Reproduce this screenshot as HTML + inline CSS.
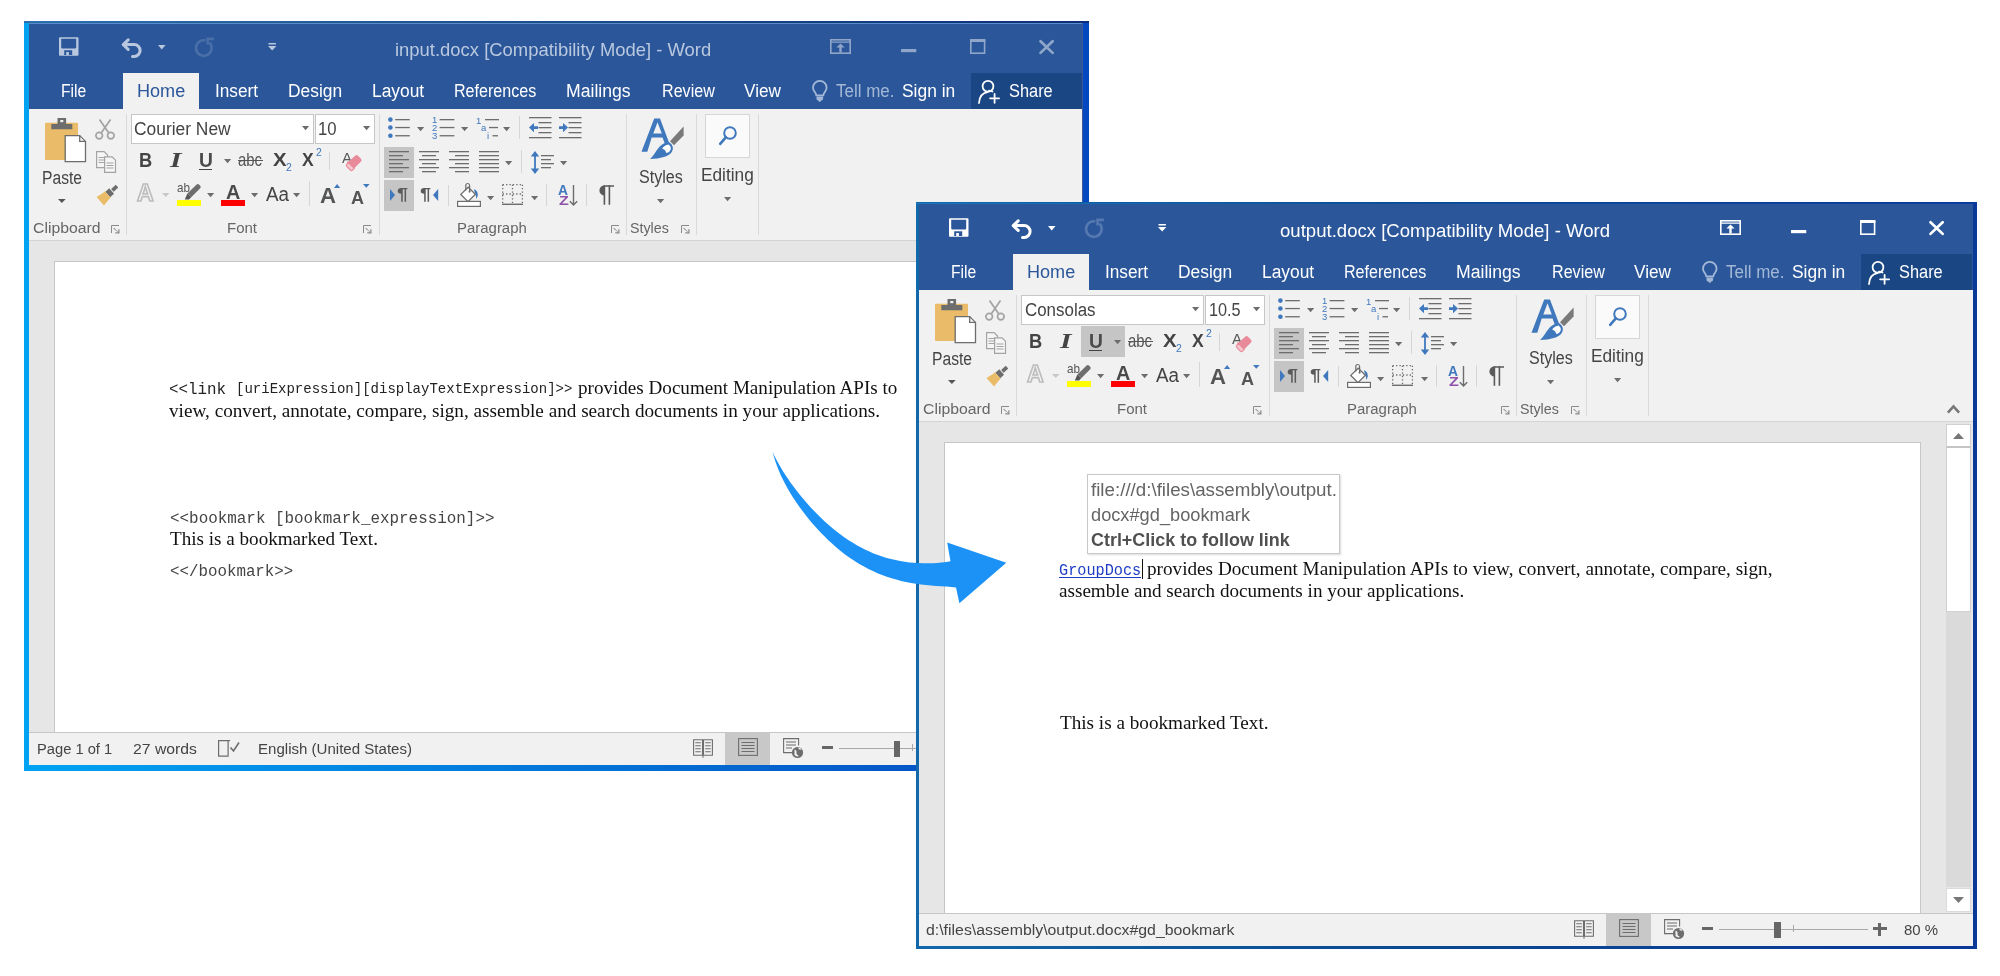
<!DOCTYPE html>
<html><head><meta charset="utf-8"><style>
html,body{margin:0;padding:0;}
body{width:2000px;height:976px;position:relative;overflow:hidden;background:#fff;font-family:"Liberation Sans",sans-serif;}
div,svg{box-sizing:border-box;}
</style></head><body>
<div style="position:absolute;left:0;top:0;width:2000px;height:976px;will-change:transform">
<div style="position:absolute;left:24.00px;top:21.00px;width:1065.00px;height:750.00px;background:linear-gradient(90deg,#00a3f2,#0348c0);"></div>
<div style="position:absolute;left:24.00px;top:21.00px;width:1065.00px;height:2.00px;background:linear-gradient(90deg,#2a6fae,#1f5490 40%,#0d2f7a);"></div>
<div style="position:absolute;left:29.00px;top:23.00px;width:1054.00px;height:86.00px;background:#2b579a;"></div>
<svg style="position:absolute;left:58.70px;top:37.00px;overflow:visible" width="19.5" height="18.7" viewBox="0 0 19.5 18.7"><path fill="#b9c8de" fill-rule="evenodd" d="M0.9 0.3h17.7a0.9 0.9 0 0 1 0.9 0.9v16.6a0.9 0.9 0 0 1-0.9 0.9H0.9a0.9 0.9 0 0 1-0.9-0.9V1.2a0.9 0.9 0 0 1 0.9-0.9zM2.2 1.7v8.6a1.3 1.3 0 0 0 1.3 1.3h12.4a1.3 1.3 0 0 0 1.3-1.3V1.7zM5.2 13.2v4.9h2v-3h2.7v3h3.3v-4.9z"/></svg>
<svg style="position:absolute;left:122.00px;top:37.70px;overflow:visible" width="22" height="19.5" viewBox="0 0 22 19.5"><g fill="none" stroke="#b9c8de" stroke-width="3" stroke-linecap="round" stroke-linejoin="round"><path d="M6.2 1.8 1.2 6.6 6.2 11.4"/><path d="M2.2 6.6H12.2a5.9 5.9 0 0 1 0 11.8H10.5"/></g></svg>
<svg style="position:absolute;left:157.70px;top:44.50px;overflow:visible" width="7.5" height="4.5" viewBox="0 0 7.5 4.5"><path fill="#b9c8de" d="M0 0h7.5L3.75 4.5z"/></svg>
<svg style="position:absolute;left:193.70px;top:37.00px;overflow:visible" width="20" height="20" viewBox="0 0 20 20"><g fill="none" stroke="#4a6fa8" stroke-width="2.6" stroke-linecap="square"><path d="M10 3.2A7.8 7.8 0 1 0 16.2 6.5"/><path d="M13.6 6.2V1.9h5"/></g></svg>
<svg style="position:absolute;left:268.00px;top:43.00px;overflow:visible" width="8.4" height="7.5" viewBox="0 0 8.4 7.5"><path fill="#b9c8de" d="M0.5 0h7.4v1.6H0.5zM0 3h8.4L4.2 7.5z"/></svg>
<div style="position:absolute;left:395.40px;top:40.05px;font-family:'Liberation Sans', sans-serif;font-size:19px;line-height:19px;white-space:pre;color:#b9c8de;font-weight:normal;transform-origin:0 0;transform:scaleX(0.9701);">input.docx [Compatibility Mode] - Word</div>
<svg style="position:absolute;left:829.50px;top:39.30px;overflow:visible" width="21" height="15" viewBox="0 0 21 15"><g fill="none" stroke="#8fa6c9" stroke-width="1.6"><rect x="0.8" y="0.8" width="19.4" height="13.4"/></g><path fill="#8fa6c9" d="M0.8 2.6h19.4v1.2H0.8zM10.5 4.6 6.4 8.6h2.9v5h2.4v-5h2.9z"/></svg>
<svg style="position:absolute;left:900.50px;top:48.50px;overflow:visible" width="15.3" height="3.2" viewBox="0 0 15.3 3.2"><rect fill="#8fa6c9" width="15.3" height="3.2"/></svg>
<svg style="position:absolute;left:969.80px;top:39.30px;overflow:visible" width="15.4" height="15" viewBox="0 0 15.4 15"><g fill="none" stroke="#8fa6c9" stroke-width="1.6"><rect x="0.8" y="1.4" width="13.8" height="12.8"/></g><rect fill="#8fa6c9" x="0" y="0" width="15.4" height="3"/></svg>
<svg style="position:absolute;left:1039.20px;top:40.00px;overflow:visible" width="15.2" height="14.2" viewBox="0 0 15.2 14.2"><g stroke="#8fa6c9" stroke-width="2.7" stroke-linecap="round"><path d="M1.5 1.3 13.7 12.9M13.7 1.3 1.5 12.9"/></g></svg>
<div style="position:absolute;left:122.70px;top:73.00px;width:76.10px;height:36.00px;background:#f1f1f1;"></div>
<div style="position:absolute;left:60.80px;top:81.50px;font-family:'Liberation Sans', sans-serif;font-size:18px;line-height:18px;white-space:pre;color:#ffffff;font-weight:normal;transform-origin:0 0;transform:scaleX(0.8688);">File</div>
<div style="position:absolute;left:214.70px;top:81.50px;font-family:'Liberation Sans', sans-serif;font-size:18px;line-height:18px;white-space:pre;color:#ffffff;font-weight:normal;transform-origin:0 0;transform:scaleX(0.9574);">Insert</div>
<div style="position:absolute;left:287.80px;top:81.50px;font-family:'Liberation Sans', sans-serif;font-size:18px;line-height:18px;white-space:pre;color:#ffffff;font-weight:normal;transform-origin:0 0;transform:scaleX(0.9655);">Design</div>
<div style="position:absolute;left:371.80px;top:81.50px;font-family:'Liberation Sans', sans-serif;font-size:18px;line-height:18px;white-space:pre;color:#ffffff;font-weight:normal;transform-origin:0 0;transform:scaleX(0.9659);">Layout</div>
<div style="position:absolute;left:453.50px;top:81.50px;font-family:'Liberation Sans', sans-serif;font-size:18px;line-height:18px;white-space:pre;color:#ffffff;font-weight:normal;transform-origin:0 0;transform:scaleX(0.8941);">References</div>
<div style="position:absolute;left:566.40px;top:81.50px;font-family:'Liberation Sans', sans-serif;font-size:18px;line-height:18px;white-space:pre;color:#ffffff;font-weight:normal;transform-origin:0 0;transform:scaleX(0.9784);">Mailings</div>
<div style="position:absolute;left:661.80px;top:81.50px;font-family:'Liberation Sans', sans-serif;font-size:18px;line-height:18px;white-space:pre;color:#ffffff;font-weight:normal;transform-origin:0 0;transform:scaleX(0.8946);">Review</div>
<div style="position:absolute;left:743.90px;top:81.50px;font-family:'Liberation Sans', sans-serif;font-size:18px;line-height:18px;white-space:pre;color:#ffffff;font-weight:normal;transform-origin:0 0;transform:scaleX(0.9563);">View</div>
<div style="position:absolute;left:902.30px;top:81.50px;font-family:'Liberation Sans', sans-serif;font-size:18px;line-height:18px;white-space:pre;color:#ffffff;font-weight:normal;transform-origin:0 0;transform:scaleX(0.9666);">Sign in</div>
<div style="position:absolute;left:136.80px;top:81.50px;font-family:'Liberation Sans', sans-serif;font-size:18px;line-height:18px;white-space:pre;color:#2b579a;font-weight:normal;transform-origin:0 0;transform:scaleX(1.0039);">Home</div>
<div style="position:absolute;left:835.70px;top:81.50px;font-family:'Liberation Sans', sans-serif;font-size:18px;line-height:18px;white-space:pre;color:#a3b8d6;font-weight:normal;transform-origin:0 0;transform:scaleX(0.9433);">Tell me.</div>
<svg style="position:absolute;left:812.40px;top:80.60px;overflow:visible" width="15.6" height="20.7" viewBox="0 0 15.6 20.7"><g fill="none" stroke="#a3b8d6" stroke-width="1.8"><path d="M4.3 14.3C4 11.5 1 10.2 1 6.7a6.8 6.8 0 0 1 13.6 0c0 3.5-3 4.8-3.3 7.6z"/></g><path fill="#a3b8d6" d="M4.5 15.6h6.6v2.2a1.6 1.6 0 0 1-1.6 1.6h-0.3a1.4 1.4 0 0 1-2.8 0h-0.3a1.6 1.6 0 0 1-1.6-1.6z"/></svg>
<div style="position:absolute;left:971.20px;top:73.00px;width:110.80px;height:35.50px;background:#1a4684;"></div>
<svg style="position:absolute;left:978.00px;top:79.70px;overflow:visible" width="22.4" height="23.5" viewBox="0 0 22.4 23.5"><g fill="none" stroke="#fff" stroke-width="1.8" stroke-linecap="round"><circle cx="10" cy="6.3" r="5.4"/><path d="M1 23C1.5 16.5 5 12.8 9.5 12.2M15 14.2"/><path d="M16.6 13.8v9M12.1 18.3h9"/><path d="M14.5 11.6c-1-0.6-2.3-0.9-3.5-1"/></g></svg>
<div style="position:absolute;left:1009.00px;top:81.50px;font-family:'Liberation Sans', sans-serif;font-size:18px;line-height:18px;white-space:pre;color:#ffffff;font-weight:normal;transform-origin:0 0;transform:scaleX(0.9098);">Share</div>
<div style="position:absolute;left:29.00px;top:109.00px;width:1054.00px;height:131.00px;background:#f1f1f1;"></div>
<div style="position:absolute;left:29.00px;top:240.00px;width:1054.00px;height:1.00px;background:#d4d4d4;"></div>
<div style="position:absolute;left:125.90px;top:113.50px;width:1.00px;height:121.50px;background:#dadada;"></div>
<div style="position:absolute;left:379.20px;top:113.50px;width:1.00px;height:121.50px;background:#dadada;"></div>
<div style="position:absolute;left:625.90px;top:113.50px;width:1.00px;height:121.50px;background:#dadada;"></div>
<div style="position:absolute;left:695.90px;top:113.50px;width:1.00px;height:121.50px;background:#dadada;"></div>
<div style="position:absolute;left:758.20px;top:113.50px;width:1.00px;height:121.50px;background:#dadada;"></div>
<div style="position:absolute;left:32.50px;top:220.43px;font-family:'Liberation Sans', sans-serif;font-size:15.5px;line-height:15.5px;white-space:pre;color:#666;font-weight:normal;transform-origin:0 0;transform:scaleX(1.0174);">Clipboard</div>
<div style="position:absolute;left:227.00px;top:220.43px;font-family:'Liberation Sans', sans-serif;font-size:15.5px;line-height:15.5px;white-space:pre;color:#666;font-weight:normal;transform-origin:0 0;transform:scaleX(0.9673);">Font</div>
<div style="position:absolute;left:456.60px;top:220.43px;font-family:'Liberation Sans', sans-serif;font-size:15.5px;line-height:15.5px;white-space:pre;color:#666;font-weight:normal;transform-origin:0 0;transform:scaleX(0.9643);">Paragraph</div>
<div style="position:absolute;left:630.00px;top:220.43px;font-family:'Liberation Sans', sans-serif;font-size:15.5px;line-height:15.5px;white-space:pre;color:#666;font-weight:normal;transform-origin:0 0;transform:scaleX(0.9192);">Styles</div>
<svg style="position:absolute;left:110.50px;top:224.50px;overflow:visible" width="9" height="9" viewBox="0 0 9 9"><g fill="none" stroke="#8a8a8a" stroke-width="1"><path d="M0.5 8V0.5H8"/></g><path fill="#8a8a8a" d="M3 2.8 7.3 7.1V4.3h1.2v4.2H4.3V7.3h2.8L2.2 3.6z"/></svg>
<svg style="position:absolute;left:363.30px;top:224.50px;overflow:visible" width="9" height="9" viewBox="0 0 9 9"><g fill="none" stroke="#8a8a8a" stroke-width="1"><path d="M0.5 8V0.5H8"/></g><path fill="#8a8a8a" d="M3 2.8 7.3 7.1V4.3h1.2v4.2H4.3V7.3h2.8L2.2 3.6z"/></svg>
<svg style="position:absolute;left:610.50px;top:224.50px;overflow:visible" width="9" height="9" viewBox="0 0 9 9"><g fill="none" stroke="#8a8a8a" stroke-width="1"><path d="M0.5 8V0.5H8"/></g><path fill="#8a8a8a" d="M3 2.8 7.3 7.1V4.3h1.2v4.2H4.3V7.3h2.8L2.2 3.6z"/></svg>
<svg style="position:absolute;left:680.50px;top:224.50px;overflow:visible" width="9" height="9" viewBox="0 0 9 9"><g fill="none" stroke="#8a8a8a" stroke-width="1"><path d="M0.5 8V0.5H8"/></g><path fill="#8a8a8a" d="M3 2.8 7.3 7.1V4.3h1.2v4.2H4.3V7.3h2.8L2.2 3.6z"/></svg>
<svg style="position:absolute;left:45.00px;top:118.00px;overflow:visible" width="42" height="45" viewBox="0 0 42 45"><rect x="0" y="4.8" width="33" height="37.2" rx="1" fill="#eabb69"/><path fill="#6d6d6d" d="M6.3 6h21v5.2H6.3zM12.5 0h8.6v6.5h-8.6z"/><rect x="15.3" y="2" width="3" height="2.2" fill="#f1f1f1"/><path fill="#fff" stroke="#6d6d6d" stroke-width="1.3" d="M20.2 17.6h14.5l5.8 5.8v20.3H20.2z"/><path fill="none" stroke="#6d6d6d" stroke-width="1.3" d="M34.7 17.6v5.8h5.8"/></svg>
<div style="position:absolute;left:42.00px;top:168.50px;font-family:'Liberation Sans', sans-serif;font-size:18px;line-height:18px;white-space:pre;color:#444;font-weight:normal;transform-origin:0 0;transform:scaleX(0.8690);">Paste</div>
<svg style="position:absolute;left:57.80px;top:198.80px;overflow:visible" width="7.7" height="4" viewBox="0 0 7.7 4"><path fill="#555" d="M0 0h7.7L3.85 4z"/></svg>
<svg style="position:absolute;left:95.30px;top:118.50px;overflow:visible" width="20" height="21" viewBox="0 0 20 21"><g fill="none" stroke="#a3a3a3" stroke-width="1.7"><circle cx="4.2" cy="16.6" r="3.3"/><circle cx="15.8" cy="16.6" r="3.3"/><path d="M6.2 13.9 15.5 0.5M13.8 13.9 4.5 0.5"/></g></svg>
<svg style="position:absolute;left:96.00px;top:151.00px;overflow:visible" width="20" height="22" viewBox="0 0 20 22"><g fill="#f5f5f5" stroke="#a3a3a3" stroke-width="1.2"><path d="M0.6 0.6h7.5l3.4 3.4v12.6H0.6z"/><path d="M8.6 5.8h7.5l3.4 3.4v12.2H8.6z"/></g><g stroke="#a3a3a3" stroke-width="1"><path d="M2.5 6.5h6M2.5 9h6M2.5 11.5h6M10.5 12h7M10.5 14.5h7M10.5 17h7"/></g></svg>
<svg style="position:absolute;left:-890.00px;top:-181.00px;overflow:visible" width="1" height="1" viewBox="0 0 1 1"><g transform="translate(1007 367.2) rotate(138)"><rect x="0" y="-1.9" width="6.2" height="3.8" fill="#6d6d6d"/><rect x="7.2" y="-3.6" width="5.2" height="7.2" fill="#6d6d6d"/><path fill="#eabb69" d="M12.4 -4.4H15L22.5 -5.6 22.5 5.6 15 4.4H12.4z"/></g></svg>
<div style="position:absolute;left:131.00px;top:113.50px;width:182.70px;height:30.10px;background:#fff;border:1px solid #c6c6c6;"></div>
<div style="position:absolute;left:314.70px;top:113.50px;width:60.00px;height:30.10px;background:#fff;border:1px solid #c6c6c6;"></div>
<div style="position:absolute;left:134.40px;top:120.40px;font-family:'Liberation Sans', sans-serif;font-size:18px;line-height:18px;white-space:pre;color:#444;font-weight:normal;transform-origin:0 0;transform:scaleX(0.9657);">Courier New</div>
<div style="position:absolute;left:318.00px;top:120.40px;font-family:'Liberation Sans', sans-serif;font-size:18px;line-height:18px;white-space:pre;color:#444;font-weight:normal;transform-origin:0 0;transform:scaleX(0.9290);">10</div>
<svg style="position:absolute;left:302.00px;top:125.80px;overflow:visible" width="7.2" height="4.2" viewBox="0 0 7.2 4.2"><path fill="#6d6d6d" d="M0 0h7.2L3.6 4.2z"/></svg>
<svg style="position:absolute;left:363.00px;top:125.80px;overflow:visible" width="7.2" height="4.2" viewBox="0 0 7.2 4.2"><path fill="#6d6d6d" d="M0 0h7.2L3.6 4.2z"/></svg>
<div style="position:absolute;left:139.30px;top:149.50px;font-family:'Liberation Sans', sans-serif;font-size:20px;line-height:20px;white-space:pre;color:#444;font-weight:bold;transform-origin:0 0;transform:scaleX(0.9139);">B</div>
<div style="position:absolute;left:169.50px;top:149.90px;font-family:'Liberation Serif', serif;font-size:20px;line-height:20px;white-space:pre;color:#444;font-weight:bold;transform-origin:0 0;transform:scaleX(1.4775);font-style:italic;">I</div>
<div style="position:absolute;left:198.60px;top:149.50px;font-family:'Liberation Sans', sans-serif;font-size:20px;line-height:20px;white-space:pre;color:#4a4a4a;font-weight:bold;transform-origin:0 0;transform:scaleX(0.9624);">U</div>
<div style="position:absolute;left:198.60px;top:168.50px;width:13.90px;height:1.50px;background:#444;"></div>
<svg style="position:absolute;left:224.00px;top:158.80px;overflow:visible" width="7.2" height="4" viewBox="0 0 7.2 4"><path fill="#6d6d6d" d="M0 0h7.2L3.6 4.2z"/></svg>
<div style="position:absolute;left:238.00px;top:150.78px;font-family:'Liberation Sans', sans-serif;font-size:18.5px;line-height:18.5px;white-space:pre;color:#555;font-weight:normal;transform-origin:0 0;transform:scaleX(0.8046);">abc</div>
<div style="position:absolute;left:237.50px;top:159.80px;width:25.00px;height:1.50px;background:#555;"></div>
<div style="position:absolute;left:272.80px;top:151.20px;font-family:'Liberation Sans', sans-serif;font-size:18px;line-height:18px;white-space:pre;color:#444;font-weight:bold;transform-origin:0 0;transform:scaleX(1.1328);">X</div>
<div style="position:absolute;left:285.70px;top:162.50px;font-family:'Liberation Sans', sans-serif;font-size:10px;line-height:10px;white-space:pre;color:#3f78bd;font-weight:normal;transform-origin:0 0;transform:scaleX(1.0429);">2</div>
<div style="position:absolute;left:302.00px;top:151.20px;font-family:'Liberation Sans', sans-serif;font-size:18px;line-height:18px;white-space:pre;color:#444;font-weight:bold;transform-origin:0 0;transform:scaleX(0.9745);">X</div>
<div style="position:absolute;left:315.80px;top:147.50px;font-family:'Liberation Sans', sans-serif;font-size:10px;line-height:10px;white-space:pre;color:#3f78bd;font-weight:normal;transform-origin:0 0;transform:scaleX(1.0429);">2</div>
<div style="position:absolute;left:329.00px;top:151.50px;width:1.00px;height:18.50px;background:#d6d6d6;"></div>
<div style="position:absolute;left:342.40px;top:151.10px;font-family:'Liberation Sans', sans-serif;font-size:14px;line-height:14px;white-space:pre;color:#5a5a5a;font-weight:normal;transform-origin:0 0;transform:scaleX(1.0709);">A</div>
<svg style="position:absolute;left:346.00px;top:155.00px;overflow:visible" width="16" height="16" viewBox="0 0 16 16"><path fill="#e88a9a" d="M9.2 0.8a2 2 0 0 1 2.8 0l3 3a2 2 0 0 1 0 2.8L8.3 13.3 2 7z"/><path fill="#f6c5cd" stroke="#e88a9a" stroke-width="1.2" d="M2 7 8.3 13.3 6.5 15.1a1.5 1.5 0 0 1-2.1 0L0.9 11.6a1.5 1.5 0 0 1 0-2.1z"/></svg>
<div style="position:absolute;left:137.00px;top:182.15px;font-family:'Liberation Sans', sans-serif;font-size:23px;line-height:23px;white-space:pre;color:#f4f4f4;font-weight:bold;transform-origin:0 0;transform:scaleX(1.0054);-webkit-text-stroke:1.6px #bcbcbc;">A</div>
<svg style="position:absolute;left:162.00px;top:193.00px;overflow:visible" width="7.5" height="4" viewBox="0 0 7.5 4"><path fill="#c8c8c8" d="M0 0h7.5L3.75 4z"/></svg>
<div style="position:absolute;left:176.60px;top:180.75px;font-family:'Liberation Sans', sans-serif;font-size:13px;line-height:13px;white-space:pre;color:#555;font-weight:normal;transform-origin:0 0;transform:scaleX(0.8990);">ab</div>
<svg style="position:absolute;left:183.00px;top:183.50px;overflow:visible" width="18" height="17" viewBox="0 0 18 17"><path fill="#6d6d6d" d="M13.6 0.6a1.7 1.7 0 0 1 2.4 0l1.2 1.2a1.7 1.7 0 0 1 0 2.4L8.2 13.2 4.4 9.4z"/><path fill="#555" d="M4.4 9.4 8.2 13.2 6 15.6H1.8z"/></svg>
<div style="position:absolute;left:176.60px;top:200.00px;width:24.70px;height:6.00px;background:#ffff00;"></div>
<svg style="position:absolute;left:207.20px;top:192.80px;overflow:visible" width="7.2" height="4" viewBox="0 0 7.2 4"><path fill="#6d6d6d" d="M0 0h7.2L3.6 4.2z"/></svg>
<div style="position:absolute;left:225.50px;top:180.95px;font-family:'Liberation Sans', sans-serif;font-size:21px;line-height:21px;white-space:pre;color:#4a4a4a;font-weight:bold;transform-origin:0 0;transform:scaleX(0.9429);">A</div>
<div style="position:absolute;left:221.00px;top:200.30px;width:23.80px;height:5.40px;background:#ff0000;"></div>
<svg style="position:absolute;left:251.30px;top:192.80px;overflow:visible" width="7.2" height="4" viewBox="0 0 7.2 4"><path fill="#6d6d6d" d="M0 0h7.2L3.6 4.2z"/></svg>
<div style="position:absolute;left:266.30px;top:184.00px;font-family:'Liberation Sans', sans-serif;font-size:20px;line-height:20px;white-space:pre;color:#444;font-weight:normal;transform-origin:0 0;transform:scaleX(0.9402);">Aa</div>
<svg style="position:absolute;left:293.30px;top:192.80px;overflow:visible" width="7.2" height="4" viewBox="0 0 7.2 4"><path fill="#6d6d6d" d="M0 0h7.2L3.6 4.2z"/></svg>
<div style="position:absolute;left:309.20px;top:181.00px;width:1.00px;height:25.00px;background:#d6d6d6;"></div>
<div style="position:absolute;left:320.00px;top:185.10px;font-family:'Liberation Sans', sans-serif;font-size:22px;line-height:22px;white-space:pre;color:#555;font-weight:bold;transform-origin:0 0;transform:scaleX(1.0071);">A</div>
<svg style="position:absolute;left:333.80px;top:184.00px;overflow:visible" width="6.2" height="4" viewBox="0 0 6.2 4"><path fill="#3f78bd" d="M0 4h6.2L3.1 0z"/></svg>
<div style="position:absolute;left:351.00px;top:188.50px;font-family:'Liberation Sans', sans-serif;font-size:18px;line-height:18px;white-space:pre;color:#555;font-weight:bold;transform-origin:0 0;">A</div>
<svg style="position:absolute;left:363.00px;top:184.00px;overflow:visible" width="6.6" height="3.8" viewBox="0 0 6.6 3.8"><path fill="#3f78bd" d="M0 0h6.6L3.3 3.8z"/></svg>
<svg style="position:absolute;left:388.00px;top:117.00px;overflow:visible" width="22" height="21" viewBox="0 0 22 21"><circle cx="2.4" cy="2.6" r="2.3" fill="#3f78bd"/><rect x="7.2" y="2.0" width="14.6" height="1.3" fill="#6d6d6d"/><circle cx="2.4" cy="10.5" r="2.3" fill="#3f78bd"/><rect x="7.2" y="9.9" width="14.6" height="1.3" fill="#6d6d6d"/><circle cx="2.4" cy="18.7" r="2.3" fill="#3f78bd"/><rect x="7.2" y="18.099999999999998" width="14.6" height="1.3" fill="#6d6d6d"/></svg>
<svg style="position:absolute;left:417.30px;top:127.00px;overflow:visible" width="7" height="3.8" viewBox="0 0 7 3.8"><path fill="#6d6d6d" d="M0 0h7.2L3.6 4.2z"/></svg>
<svg style="position:absolute;left:432.00px;top:117.00px;overflow:visible" width="23" height="22" viewBox="0 0 23 22"><rect x="7.6" y="2.0" width="14.8" height="1.3" fill="#6d6d6d"/><rect x="7.6" y="9.9" width="14.8" height="1.3" fill="#6d6d6d"/><rect x="7.6" y="18.099999999999998" width="14.8" height="1.3" fill="#6d6d6d"/><text x="0" y="6" font-family="Liberation Sans" font-size="9.5" fill="#3f78bd">1</text><text x="0" y="14" font-family="Liberation Sans" font-size="9.5" fill="#3f78bd">2</text><text x="0" y="22" font-family="Liberation Sans" font-size="9.5" fill="#3f78bd">3</text></svg>
<svg style="position:absolute;left:461.40px;top:127.00px;overflow:visible" width="7" height="3.8" viewBox="0 0 7 3.8"><path fill="#6d6d6d" d="M0 0h7.2L3.6 4.2z"/></svg>
<svg style="position:absolute;left:475.70px;top:117.00px;overflow:visible" width="23" height="22" viewBox="0 0 23 22"><rect x="9" y="2" width="14" height="1.3" fill="#6d6d6d"/><rect x="13" y="9.9" width="9" height="1.3" fill="#6d6d6d"/><rect x="16.5" y="18.1" width="5.5" height="1.3" fill="#6d6d6d"/><text x="0" y="6.5" font-family="Liberation Sans" font-size="9.5" fill="#3f78bd">1</text><text x="5" y="14" font-family="Liberation Sans" font-size="9.5" fill="#3f78bd">a</text><text x="11" y="22" font-family="Liberation Sans" font-size="9.5" fill="#3f78bd">i</text></svg>
<svg style="position:absolute;left:503.00px;top:127.00px;overflow:visible" width="7" height="3.8" viewBox="0 0 7 3.8"><path fill="#6d6d6d" d="M0 0h7.2L3.6 4.2z"/></svg>
<div style="position:absolute;left:519.00px;top:116.00px;width:1.00px;height:22.60px;background:#d6d6d6;"></div>
<svg style="position:absolute;left:528.80px;top:117.00px;overflow:visible" width="22.5" height="21" viewBox="0 0 22.5 21"><g fill="#6d6d6d"><rect x="0" y="0" width="22.5" height="1.3"/><rect x="9.5" y="5" width="13" height="1.3"/><rect x="9.5" y="10" width="13" height="1.3"/><rect x="9.5" y="15" width="13" height="1.3"/><rect x="0" y="20" width="22.5" height="1.3"/></g><path fill="#3f78bd" d="M0 10.6 5 6v3.3h4v2.6H5v3.3z"/></svg>
<svg style="position:absolute;left:558.70px;top:117.00px;overflow:visible" width="22.5" height="21" viewBox="0 0 22.5 21"><g fill="#6d6d6d"><rect x="0" y="0" width="22.5" height="1.3"/><rect x="9.5" y="5" width="13" height="1.3"/><rect x="9.5" y="10" width="13" height="1.3"/><rect x="9.5" y="15" width="13" height="1.3"/><rect x="0" y="20" width="22.5" height="1.3"/></g><path fill="#3f78bd" d="M9 10.6 4 6v3.3H0v2.6h4v3.3z"/></svg>
<div style="position:absolute;left:384.20px;top:147.20px;width:29.80px;height:30.40px;background:#c5c5c5;"></div>
<svg style="position:absolute;left:389.00px;top:150.80px;overflow:visible" width="20" height="21" viewBox="0 0 20 21"><g fill="#6d6d6d"><rect x="0" y="0" width="20" height="1.3"/><rect x="0" y="4" width="14" height="1.3"/><rect x="0" y="8" width="20" height="1.3"/><rect x="0" y="12" width="14" height="1.3"/><rect x="0" y="16" width="20" height="1.3"/><rect x="0" y="20" width="14" height="1.3"/></g></svg>
<svg style="position:absolute;left:419.00px;top:150.80px;overflow:visible" width="20" height="21" viewBox="0 0 20 21"><g fill="#6d6d6d"><rect x="0" y="0" width="20" height="1.3"/><rect x="3" y="4" width="14" height="1.3"/><rect x="0" y="8" width="20" height="1.3"/><rect x="3" y="12" width="14" height="1.3"/><rect x="0" y="16" width="20" height="1.3"/><rect x="3" y="20" width="14" height="1.3"/></g></svg>
<svg style="position:absolute;left:449.20px;top:150.80px;overflow:visible" width="20" height="21" viewBox="0 0 20 21"><g fill="#6d6d6d"><rect x="0" y="0" width="20" height="1.3"/><rect x="6" y="4" width="14" height="1.3"/><rect x="0" y="8" width="20" height="1.3"/><rect x="6" y="12" width="14" height="1.3"/><rect x="0" y="16" width="20" height="1.3"/><rect x="6" y="20" width="14" height="1.3"/></g></svg>
<svg style="position:absolute;left:479.00px;top:150.80px;overflow:visible" width="20" height="21" viewBox="0 0 20 21"><g fill="#6d6d6d"><rect x="0" y="0" width="20" height="1.3"/><rect x="0" y="4" width="20" height="1.3"/><rect x="0" y="8" width="20" height="1.3"/><rect x="0" y="12" width="20" height="1.3"/><rect x="0" y="16" width="20" height="1.3"/><rect x="0" y="20" width="20" height="1.3"/></g></svg>
<svg style="position:absolute;left:505.40px;top:160.80px;overflow:visible" width="7" height="4" viewBox="0 0 7 4"><path fill="#6d6d6d" d="M0 0h7.2L3.6 4.2z"/></svg>
<div style="position:absolute;left:521.10px;top:150.00px;width:1.00px;height:23.00px;background:#d6d6d6;"></div>
<svg style="position:absolute;left:530.70px;top:150.80px;overflow:visible" width="23" height="23" viewBox="0 0 23 23"><rect x="3.1" y="4" width="1.8" height="15" fill="#3f78bd"/><path fill="#3f78bd" d="M4 0 8.2 5.6H-0.2zM4 23 8.2 17.4H-0.2z"/><g fill="#6d6d6d"><rect x="10" y="4" width="13" height="1.3"/><rect x="10" y="8" width="10" height="1.3"/><rect x="10" y="12" width="13" height="1.3"/><rect x="10" y="16" width="10" height="1.3"/></g></svg>
<svg style="position:absolute;left:560.00px;top:160.80px;overflow:visible" width="7" height="4" viewBox="0 0 7 4"><path fill="#6d6d6d" d="M0 0h7.2L3.6 4.2z"/></svg>
<div style="position:absolute;left:384.20px;top:180.20px;width:29.80px;height:30.40px;background:#c5c5c5;"></div>
<svg style="position:absolute;left:389.60px;top:188.80px;overflow:visible" width="19" height="13" viewBox="0 0 19 13"><path fill="#3f78bd" d="M0 0v12l5-6z"/></svg>
<div style="position:absolute;left:397.00px;top:187.40px;font-family:'Liberation Sans', sans-serif;font-size:16px;line-height:16px;white-space:pre;color:#5a5a5a;font-weight:bold;transform-origin:0 0;transform:scaleX(1.2362);">¶</div>
<div style="position:absolute;left:419.80px;top:187.40px;font-family:'Liberation Sans', sans-serif;font-size:16px;line-height:16px;white-space:pre;color:#5a5a5a;font-weight:bold;transform-origin:0 0;transform:scaleX(1.2362);">¶</div>
<svg style="position:absolute;left:432.50px;top:188.80px;overflow:visible" width="5.2" height="12" viewBox="0 0 5.2 12"><path fill="#3f78bd" d="M5.2 0v12L0 6z"/></svg>
<div style="position:absolute;left:448.00px;top:184.50px;width:1.00px;height:21.50px;background:#d6d6d6;"></div>
<svg style="position:absolute;left:457.00px;top:183.00px;overflow:visible" width="24" height="24" viewBox="0 0 24 24"><path fill="#3f78bd" d="M16.8 6.2c2.6 0.4 4.2 2.8 4 6.2l-1.4 3.6-0.8-4.6z"/><path fill="#fff" stroke="#6d6d6d" stroke-width="1.3" d="M11.2 4.2 18.4 11.3 11 18.6 3.8 11.4z"/><path fill="none" stroke="#6d6d6d" stroke-width="1.2" d="M8.8 7.6V2.4a1.9 1.9 0 0 1 3.8 0V8"/><circle cx="12.6" cy="8.6" r="1.1" fill="#6d6d6d"/><rect x="0.6" y="18.4" width="22.8" height="5" fill="#fff" stroke="#6d6d6d" stroke-width="1.2"/></svg>
<svg style="position:absolute;left:487.20px;top:195.50px;overflow:visible" width="7.2" height="4" viewBox="0 0 7.2 4"><path fill="#6d6d6d" d="M0 0h7.2L3.6 4.2z"/></svg>
<svg style="position:absolute;left:502.00px;top:184.20px;overflow:visible" width="21" height="21" viewBox="0 0 21 21"><g fill="none" stroke="#6a6a6a" stroke-width="1.3" stroke-dasharray="1.3 2.1"><path d="M0.65 0.65H20.4M0.65 10H20.4M0.65 0.65V19.5M10.5 0.65V19.5M20.4 0.65V19.5"/></g><rect x="0" y="19.6" width="21" height="1.4" fill="#6d6d6d"/></svg>
<svg style="position:absolute;left:531.20px;top:195.50px;overflow:visible" width="7.2" height="4" viewBox="0 0 7.2 4"><path fill="#6d6d6d" d="M0 0h7.2L3.6 4.2z"/></svg>
<div style="position:absolute;left:546.20px;top:184.00px;width:1.00px;height:22.00px;background:#d6d6d6;"></div>
<div style="position:absolute;left:558.30px;top:183.10px;font-family:'Liberation Sans', sans-serif;font-size:14px;line-height:14px;white-space:pre;color:#3f78bd;font-weight:bold;transform-origin:0 0;transform:scaleX(0.9891);">A</div>
<div style="position:absolute;left:558.50px;top:194.33px;font-family:'Liberation Sans', sans-serif;font-size:13.5px;line-height:13.5px;white-space:pre;color:#8e52a8;font-weight:bold;transform-origin:0 0;transform:scaleX(1.1884);">Z</div>
<svg style="position:absolute;left:569.00px;top:185.00px;overflow:visible" width="9" height="21" viewBox="0 0 9 21"><g fill="none" stroke="#6d6d6d" stroke-width="1.4"><path d="M4.5 0v20M0.8 16.3l3.7 3.7 3.7-3.7"/></g></svg>
<div style="position:absolute;left:586.10px;top:184.00px;width:1.00px;height:22.00px;background:#d6d6d6;"></div>
<svg style="position:absolute;left:597.80px;top:185.20px;overflow:visible" width="16" height="20" viewBox="0 0 16 20"><path fill="#5a5a5a" d="M6.6 0.2H16v1.5H6.6zM6.6 0.2v10.4A5.2 5.2 0 0 1 6.6 0.2z"/><rect x="5.6" y="0.2" width="1.6" height="19.6" fill="#5a5a5a"/><rect x="10.6" y="0.2" width="1.6" height="19.6" fill="#5a5a5a"/></svg>
<svg style="position:absolute;left:640.80px;top:117.80px;overflow:visible" width="44" height="42" viewBox="0 0 44 42"><path fill="#3f78bd" fill-rule="evenodd" d="M0.5 33.8 13.2 0.4h5.8l9.2 24.6-3.4 3.2-3.3-8.6H10.7L6.3 33.8zM12.3 15.4h8.5L16.5 4.2z"/><path fill="#7a7a7a" d="M42.6 8.6v8.8l-9.6 9.8-4-4z"/><path fill="#3f78bd" d="M28.2 24.2c3.6 2.2 4.9 6.2 2.4 10-3 4.4-11 6.2-21.6 6.9 4.6-3.8 6.6-9.6 10.2-13 2.6-2.4 5.8-4 9-3.9z"/><path fill="#fff" d="M27.6 26.4c2.4 1.6 3 4.4 1.3 6.6-1.1 1.4-2.6 1.9-3.8 1.8-0.4-2.2-1.8-3.8-4-4.4 1.6-2.2 4-3.8 6.5-4z"/></svg>
<div style="position:absolute;left:638.60px;top:168.40px;font-family:'Liberation Sans', sans-serif;font-size:18px;line-height:18px;white-space:pre;color:#444;font-weight:normal;transform-origin:0 0;transform:scaleX(0.8936);">Styles</div>
<svg style="position:absolute;left:657.30px;top:198.80px;overflow:visible" width="7.2" height="4" viewBox="0 0 7.2 4"><path fill="#6d6d6d" d="M0 0h7.2L3.6 4.2z"/></svg>
<div style="position:absolute;left:704.60px;top:113.50px;width:45.20px;height:44.90px;background:#fafafa;border:1px solid #d6d6d6;"></div>
<svg style="position:absolute;left:719.00px;top:125.60px;overflow:visible" width="18" height="19.5" viewBox="0 0 18 19.5"><g fill="none" stroke="#3f78bd" stroke-width="2"><circle cx="11" cy="7" r="5.8"/><path d="M6.8 11.3 1.2 17.8" stroke-width="2.6" stroke-linecap="round"/></g></svg>
<div style="position:absolute;left:701.00px;top:166.30px;font-family:'Liberation Sans', sans-serif;font-size:18px;line-height:18px;white-space:pre;color:#444;font-weight:normal;transform-origin:0 0;transform:scaleX(0.9594);">Editing</div>
<svg style="position:absolute;left:724.00px;top:196.70px;overflow:visible" width="7.2" height="4.2" viewBox="0 0 7.2 4.2"><path fill="#6d6d6d" d="M0 0h7.2L3.6 4.2z"/></svg>
<div style="position:absolute;left:29.00px;top:241.00px;width:1054.00px;height:491.00px;background:#e6e6e6;"></div>
<div style="position:absolute;left:54.00px;top:261.00px;width:977.00px;height:471.00px;background:#fff;border-left:1px solid #c6c6c6;border-top:1px solid #c6c6c6;border-right:1px solid #c6c6c6;"></div>
<div style="position:absolute;left:29.00px;top:731.50px;width:1054.00px;height:33.50px;background:#f1f1f1;border-top:1px solid #c6c6c6;"></div>
<div style="position:absolute;left:1082.00px;top:23.00px;width:1.00px;height:742.00px;background:#3a5a9a;"></div>
<div style="position:absolute;left:29.00px;top:23.00px;width:1053.00px;height:1.00px;background:#5a8ac8;"></div>
<div style="position:absolute;left:168.90px;top:380.88px;font-family:'Liberation Mono', monospace;font-size:17px;line-height:17px;white-space:pre;color:#222;font-weight:normal;transform-origin:0 0;transform:scaleX(0.9312);">&lt;&lt;link </div>
<div style="position:absolute;left:235.80px;top:382.40px;font-family:'Liberation Mono', monospace;font-size:15px;line-height:15px;white-space:pre;color:#222;font-weight:normal;transform-origin:0 0;transform:scaleX(0.9343);">[uriExpression][displayTextExpression]&gt;&gt;</div>
<div style="position:absolute;left:577.60px;top:378.43px;font-family:'Liberation Serif', serif;font-size:19px;line-height:19px;white-space:pre;color:#111;font-weight:normal;transform-origin:0 0;transform:scaleX(1.0052);">provides Document Manipulation APIs to</div>
<div style="position:absolute;left:169.00px;top:400.83px;font-family:'Liberation Serif', serif;font-size:19px;line-height:19px;white-space:pre;color:#111;font-weight:normal;transform-origin:0 0;transform:scaleX(1.0097);">view, convert, annotate, compare, sign, assemble and search documents in your applications.</div>
<div style="position:absolute;left:169.90px;top:510.84px;font-family:'Liberation Mono', monospace;font-size:16px;line-height:16px;white-space:pre;color:#444;font-weight:normal;transform-origin:0 0;transform:scaleX(0.9940);">&lt;&lt;bookmark [bookmark_expression]&gt;&gt;</div>
<div style="position:absolute;left:170.40px;top:528.73px;font-family:'Liberation Serif', serif;font-size:19px;line-height:19px;white-space:pre;color:#111;font-weight:normal;transform-origin:0 0;transform:scaleX(1.0058);">This is a bookmarked Text.</div>
<div style="position:absolute;left:169.90px;top:564.34px;font-family:'Liberation Mono', monospace;font-size:16px;line-height:16px;white-space:pre;color:#444;font-weight:normal;transform-origin:0 0;transform:scaleX(0.9878);">&lt;&lt;/bookmark&gt;&gt;</div>
<div style="position:absolute;left:36.60px;top:740.53px;font-family:'Liberation Sans', sans-serif;font-size:15.5px;line-height:15.5px;white-space:pre;color:#444;font-weight:normal;transform-origin:0 0;transform:scaleX(0.9485);">Page 1 of 1</div>
<div style="position:absolute;left:133.40px;top:740.53px;font-family:'Liberation Sans', sans-serif;font-size:15.5px;line-height:15.5px;white-space:pre;color:#444;font-weight:normal;transform-origin:0 0;transform:scaleX(1.0160);">27 words</div>
<div style="position:absolute;left:258.00px;top:740.53px;font-family:'Liberation Sans', sans-serif;font-size:15.5px;line-height:15.5px;white-space:pre;color:#444;font-weight:normal;transform-origin:0 0;transform:scaleX(0.9715);">English (United States)</div>
<div style="position:absolute;left:916.00px;top:202.00px;width:1061.00px;height:746.60px;background:linear-gradient(90deg,#1168aa,#0b4a90 45%,#0a3898);"></div>
<div style="position:absolute;left:916.00px;top:203.00px;width:1061.00px;height:1.00px;background:linear-gradient(90deg,#1a78c0,#0c50a0 45%,#0c3ca0);"></div>
<div style="position:absolute;left:919.00px;top:204.00px;width:1054.00px;height:86.00px;background:#2b579a;"></div>
<svg style="position:absolute;left:948.70px;top:218.00px;overflow:visible" width="19.5" height="18.7" viewBox="0 0 19.5 18.7"><path fill="#ffffff" fill-rule="evenodd" d="M0.9 0.3h17.7a0.9 0.9 0 0 1 0.9 0.9v16.6a0.9 0.9 0 0 1-0.9 0.9H0.9a0.9 0.9 0 0 1-0.9-0.9V1.2a0.9 0.9 0 0 1 0.9-0.9zM2.2 1.7v8.6a1.3 1.3 0 0 0 1.3 1.3h12.4a1.3 1.3 0 0 0 1.3-1.3V1.7zM5.2 13.2v4.9h2v-3h2.7v3h3.3v-4.9z"/></svg>
<svg style="position:absolute;left:1012.00px;top:218.70px;overflow:visible" width="22" height="19.5" viewBox="0 0 22 19.5"><g fill="none" stroke="#ffffff" stroke-width="3" stroke-linecap="round" stroke-linejoin="round"><path d="M6.2 1.8 1.2 6.6 6.2 11.4"/><path d="M2.2 6.6H12.2a5.9 5.9 0 0 1 0 11.8H10.5"/></g></svg>
<svg style="position:absolute;left:1047.70px;top:225.50px;overflow:visible" width="7.5" height="4.5" viewBox="0 0 7.5 4.5"><path fill="#ffffff" d="M0 0h7.5L3.75 4.5z"/></svg>
<svg style="position:absolute;left:1083.70px;top:218.00px;overflow:visible" width="20" height="20" viewBox="0 0 20 20"><g fill="none" stroke="#5579b0" stroke-width="2.6" stroke-linecap="square"><path d="M10 3.2A7.8 7.8 0 1 0 16.2 6.5"/><path d="M13.6 6.2V1.9h5"/></g></svg>
<svg style="position:absolute;left:1158.00px;top:224.00px;overflow:visible" width="8.4" height="7.5" viewBox="0 0 8.4 7.5"><path fill="#ffffff" d="M0.5 0h7.4v1.6H0.5zM0 3h8.4L4.2 7.5z"/></svg>
<div style="position:absolute;left:1279.60px;top:221.25px;font-family:'Liberation Sans', sans-serif;font-size:19px;line-height:19px;white-space:pre;color:#ffffff;font-weight:normal;transform-origin:0 0;transform:scaleX(0.9776);">output.docx [Compatibility Mode] - Word</div>
<svg style="position:absolute;left:1719.50px;top:220.30px;overflow:visible" width="21" height="15" viewBox="0 0 21 15"><g fill="none" stroke="#ffffff" stroke-width="1.6"><rect x="0.8" y="0.8" width="19.4" height="13.4"/></g><path fill="#ffffff" d="M0.8 2.6h19.4v1.2H0.8zM10.5 4.6 6.4 8.6h2.9v5h2.4v-5h2.9z"/></svg>
<svg style="position:absolute;left:1790.50px;top:229.50px;overflow:visible" width="15.3" height="3.2" viewBox="0 0 15.3 3.2"><rect fill="#ffffff" width="15.3" height="3.2"/></svg>
<svg style="position:absolute;left:1859.80px;top:220.30px;overflow:visible" width="15.4" height="15" viewBox="0 0 15.4 15"><g fill="none" stroke="#ffffff" stroke-width="1.6"><rect x="0.8" y="1.4" width="13.8" height="12.8"/></g><rect fill="#ffffff" x="0" y="0" width="15.4" height="3"/></svg>
<svg style="position:absolute;left:1929.20px;top:221.00px;overflow:visible" width="15.2" height="14.2" viewBox="0 0 15.2 14.2"><g stroke="#ffffff" stroke-width="2.7" stroke-linecap="round"><path d="M1.5 1.3 13.7 12.9M13.7 1.3 1.5 12.9"/></g></svg>
<div style="position:absolute;left:1012.70px;top:254.00px;width:76.10px;height:36.00px;background:#f1f1f1;"></div>
<div style="position:absolute;left:950.80px;top:262.50px;font-family:'Liberation Sans', sans-serif;font-size:18px;line-height:18px;white-space:pre;color:#ffffff;font-weight:normal;transform-origin:0 0;transform:scaleX(0.8688);">File</div>
<div style="position:absolute;left:1104.70px;top:262.50px;font-family:'Liberation Sans', sans-serif;font-size:18px;line-height:18px;white-space:pre;color:#ffffff;font-weight:normal;transform-origin:0 0;transform:scaleX(0.9574);">Insert</div>
<div style="position:absolute;left:1177.80px;top:262.50px;font-family:'Liberation Sans', sans-serif;font-size:18px;line-height:18px;white-space:pre;color:#ffffff;font-weight:normal;transform-origin:0 0;transform:scaleX(0.9655);">Design</div>
<div style="position:absolute;left:1261.80px;top:262.50px;font-family:'Liberation Sans', sans-serif;font-size:18px;line-height:18px;white-space:pre;color:#ffffff;font-weight:normal;transform-origin:0 0;transform:scaleX(0.9659);">Layout</div>
<div style="position:absolute;left:1343.50px;top:262.50px;font-family:'Liberation Sans', sans-serif;font-size:18px;line-height:18px;white-space:pre;color:#ffffff;font-weight:normal;transform-origin:0 0;transform:scaleX(0.8941);">References</div>
<div style="position:absolute;left:1456.40px;top:262.50px;font-family:'Liberation Sans', sans-serif;font-size:18px;line-height:18px;white-space:pre;color:#ffffff;font-weight:normal;transform-origin:0 0;transform:scaleX(0.9784);">Mailings</div>
<div style="position:absolute;left:1551.80px;top:262.50px;font-family:'Liberation Sans', sans-serif;font-size:18px;line-height:18px;white-space:pre;color:#ffffff;font-weight:normal;transform-origin:0 0;transform:scaleX(0.8946);">Review</div>
<div style="position:absolute;left:1633.90px;top:262.50px;font-family:'Liberation Sans', sans-serif;font-size:18px;line-height:18px;white-space:pre;color:#ffffff;font-weight:normal;transform-origin:0 0;transform:scaleX(0.9563);">View</div>
<div style="position:absolute;left:1792.30px;top:262.50px;font-family:'Liberation Sans', sans-serif;font-size:18px;line-height:18px;white-space:pre;color:#ffffff;font-weight:normal;transform-origin:0 0;transform:scaleX(0.9666);">Sign in</div>
<div style="position:absolute;left:1026.80px;top:262.50px;font-family:'Liberation Sans', sans-serif;font-size:18px;line-height:18px;white-space:pre;color:#2b579a;font-weight:normal;transform-origin:0 0;transform:scaleX(1.0039);">Home</div>
<div style="position:absolute;left:1725.70px;top:262.50px;font-family:'Liberation Sans', sans-serif;font-size:18px;line-height:18px;white-space:pre;color:#a3b8d6;font-weight:normal;transform-origin:0 0;transform:scaleX(0.9433);">Tell me.</div>
<svg style="position:absolute;left:1702.40px;top:261.60px;overflow:visible" width="15.6" height="20.7" viewBox="0 0 15.6 20.7"><g fill="none" stroke="#a3b8d6" stroke-width="1.8"><path d="M4.3 14.3C4 11.5 1 10.2 1 6.7a6.8 6.8 0 0 1 13.6 0c0 3.5-3 4.8-3.3 7.6z"/></g><path fill="#a3b8d6" d="M4.5 15.6h6.6v2.2a1.6 1.6 0 0 1-1.6 1.6h-0.3a1.4 1.4 0 0 1-2.8 0h-0.3a1.6 1.6 0 0 1-1.6-1.6z"/></svg>
<div style="position:absolute;left:1861.20px;top:254.00px;width:110.80px;height:35.50px;background:#1a4684;"></div>
<svg style="position:absolute;left:1868.00px;top:260.70px;overflow:visible" width="22.4" height="23.5" viewBox="0 0 22.4 23.5"><g fill="none" stroke="#fff" stroke-width="1.8" stroke-linecap="round"><circle cx="10" cy="6.3" r="5.4"/><path d="M1 23C1.5 16.5 5 12.8 9.5 12.2M15 14.2"/><path d="M16.6 13.8v9M12.1 18.3h9"/><path d="M14.5 11.6c-1-0.6-2.3-0.9-3.5-1"/></g></svg>
<div style="position:absolute;left:1899.00px;top:262.50px;font-family:'Liberation Sans', sans-serif;font-size:18px;line-height:18px;white-space:pre;color:#ffffff;font-weight:normal;transform-origin:0 0;transform:scaleX(0.9098);">Share</div>
<div style="position:absolute;left:919.00px;top:290.00px;width:1054.00px;height:131.00px;background:#f1f1f1;"></div>
<div style="position:absolute;left:919.00px;top:421.00px;width:1054.00px;height:1.00px;background:#d4d4d4;"></div>
<div style="position:absolute;left:1015.90px;top:294.50px;width:1.00px;height:121.50px;background:#dadada;"></div>
<div style="position:absolute;left:1269.20px;top:294.50px;width:1.00px;height:121.50px;background:#dadada;"></div>
<div style="position:absolute;left:1515.90px;top:294.50px;width:1.00px;height:121.50px;background:#dadada;"></div>
<div style="position:absolute;left:1585.90px;top:294.50px;width:1.00px;height:121.50px;background:#dadada;"></div>
<div style="position:absolute;left:1648.20px;top:294.50px;width:1.00px;height:121.50px;background:#dadada;"></div>
<div style="position:absolute;left:922.50px;top:401.43px;font-family:'Liberation Sans', sans-serif;font-size:15.5px;line-height:15.5px;white-space:pre;color:#666;font-weight:normal;transform-origin:0 0;transform:scaleX(1.0174);">Clipboard</div>
<div style="position:absolute;left:1117.00px;top:401.43px;font-family:'Liberation Sans', sans-serif;font-size:15.5px;line-height:15.5px;white-space:pre;color:#666;font-weight:normal;transform-origin:0 0;transform:scaleX(0.9673);">Font</div>
<div style="position:absolute;left:1346.60px;top:401.43px;font-family:'Liberation Sans', sans-serif;font-size:15.5px;line-height:15.5px;white-space:pre;color:#666;font-weight:normal;transform-origin:0 0;transform:scaleX(0.9643);">Paragraph</div>
<div style="position:absolute;left:1520.00px;top:401.43px;font-family:'Liberation Sans', sans-serif;font-size:15.5px;line-height:15.5px;white-space:pre;color:#666;font-weight:normal;transform-origin:0 0;transform:scaleX(0.9192);">Styles</div>
<svg style="position:absolute;left:1000.50px;top:405.50px;overflow:visible" width="9" height="9" viewBox="0 0 9 9"><g fill="none" stroke="#8a8a8a" stroke-width="1"><path d="M0.5 8V0.5H8"/></g><path fill="#8a8a8a" d="M3 2.8 7.3 7.1V4.3h1.2v4.2H4.3V7.3h2.8L2.2 3.6z"/></svg>
<svg style="position:absolute;left:1253.30px;top:405.50px;overflow:visible" width="9" height="9" viewBox="0 0 9 9"><g fill="none" stroke="#8a8a8a" stroke-width="1"><path d="M0.5 8V0.5H8"/></g><path fill="#8a8a8a" d="M3 2.8 7.3 7.1V4.3h1.2v4.2H4.3V7.3h2.8L2.2 3.6z"/></svg>
<svg style="position:absolute;left:1500.50px;top:405.50px;overflow:visible" width="9" height="9" viewBox="0 0 9 9"><g fill="none" stroke="#8a8a8a" stroke-width="1"><path d="M0.5 8V0.5H8"/></g><path fill="#8a8a8a" d="M3 2.8 7.3 7.1V4.3h1.2v4.2H4.3V7.3h2.8L2.2 3.6z"/></svg>
<svg style="position:absolute;left:1570.50px;top:405.50px;overflow:visible" width="9" height="9" viewBox="0 0 9 9"><g fill="none" stroke="#8a8a8a" stroke-width="1"><path d="M0.5 8V0.5H8"/></g><path fill="#8a8a8a" d="M3 2.8 7.3 7.1V4.3h1.2v4.2H4.3V7.3h2.8L2.2 3.6z"/></svg>
<svg style="position:absolute;left:935.00px;top:299.00px;overflow:visible" width="42" height="45" viewBox="0 0 42 45"><rect x="0" y="4.8" width="33" height="37.2" rx="1" fill="#eabb69"/><path fill="#6d6d6d" d="M6.3 6h21v5.2H6.3zM12.5 0h8.6v6.5h-8.6z"/><rect x="15.3" y="2" width="3" height="2.2" fill="#f1f1f1"/><path fill="#fff" stroke="#6d6d6d" stroke-width="1.3" d="M20.2 17.6h14.5l5.8 5.8v20.3H20.2z"/><path fill="none" stroke="#6d6d6d" stroke-width="1.3" d="M34.7 17.6v5.8h5.8"/></svg>
<div style="position:absolute;left:932.00px;top:349.50px;font-family:'Liberation Sans', sans-serif;font-size:18px;line-height:18px;white-space:pre;color:#444;font-weight:normal;transform-origin:0 0;transform:scaleX(0.8690);">Paste</div>
<svg style="position:absolute;left:947.80px;top:379.80px;overflow:visible" width="7.7" height="4" viewBox="0 0 7.7 4"><path fill="#555" d="M0 0h7.7L3.85 4z"/></svg>
<svg style="position:absolute;left:985.30px;top:299.50px;overflow:visible" width="20" height="21" viewBox="0 0 20 21"><g fill="none" stroke="#a3a3a3" stroke-width="1.7"><circle cx="4.2" cy="16.6" r="3.3"/><circle cx="15.8" cy="16.6" r="3.3"/><path d="M6.2 13.9 15.5 0.5M13.8 13.9 4.5 0.5"/></g></svg>
<svg style="position:absolute;left:986.00px;top:332.00px;overflow:visible" width="20" height="22" viewBox="0 0 20 22"><g fill="#f5f5f5" stroke="#a3a3a3" stroke-width="1.2"><path d="M0.6 0.6h7.5l3.4 3.4v12.6H0.6z"/><path d="M8.6 5.8h7.5l3.4 3.4v12.2H8.6z"/></g><g stroke="#a3a3a3" stroke-width="1"><path d="M2.5 6.5h6M2.5 9h6M2.5 11.5h6M10.5 12h7M10.5 14.5h7M10.5 17h7"/></g></svg>
<svg style="position:absolute;left:0.00px;top:0.00px;overflow:visible" width="1" height="1" viewBox="0 0 1 1"><g transform="translate(1007 367.2) rotate(138)"><rect x="0" y="-1.9" width="6.2" height="3.8" fill="#6d6d6d"/><rect x="7.2" y="-3.6" width="5.2" height="7.2" fill="#6d6d6d"/><path fill="#eabb69" d="M12.4 -4.4H15L22.5 -5.6 22.5 5.6 15 4.4H12.4z"/></g></svg>
<div style="position:absolute;left:1021.00px;top:294.50px;width:182.70px;height:30.10px;background:#fff;border:1px solid #c6c6c6;"></div>
<div style="position:absolute;left:1204.70px;top:294.50px;width:60.00px;height:30.10px;background:#fff;border:1px solid #c6c6c6;"></div>
<div style="position:absolute;left:1024.60px;top:301.40px;font-family:'Liberation Sans', sans-serif;font-size:18px;line-height:18px;white-space:pre;color:#444;font-weight:normal;transform-origin:0 0;transform:scaleX(0.9395);">Consolas</div>
<div style="position:absolute;left:1208.70px;top:301.40px;font-family:'Liberation Sans', sans-serif;font-size:18px;line-height:18px;white-space:pre;color:#444;font-weight:normal;transform-origin:0 0;transform:scaleX(0.9020);">10.5</div>
<svg style="position:absolute;left:1192.00px;top:306.80px;overflow:visible" width="7.2" height="4.2" viewBox="0 0 7.2 4.2"><path fill="#6d6d6d" d="M0 0h7.2L3.6 4.2z"/></svg>
<svg style="position:absolute;left:1253.00px;top:306.80px;overflow:visible" width="7.2" height="4.2" viewBox="0 0 7.2 4.2"><path fill="#6d6d6d" d="M0 0h7.2L3.6 4.2z"/></svg>
<div style="position:absolute;left:1081.00px;top:326.00px;width:43.80px;height:30.60px;background:#c5c5c5;"></div>
<div style="position:absolute;left:1029.30px;top:330.50px;font-family:'Liberation Sans', sans-serif;font-size:20px;line-height:20px;white-space:pre;color:#444;font-weight:bold;transform-origin:0 0;transform:scaleX(0.9139);">B</div>
<div style="position:absolute;left:1059.50px;top:330.90px;font-family:'Liberation Serif', serif;font-size:20px;line-height:20px;white-space:pre;color:#444;font-weight:bold;transform-origin:0 0;transform:scaleX(1.4775);font-style:italic;">I</div>
<div style="position:absolute;left:1088.60px;top:330.50px;font-family:'Liberation Sans', sans-serif;font-size:20px;line-height:20px;white-space:pre;color:#4a4a4a;font-weight:bold;transform-origin:0 0;transform:scaleX(0.9624);">U</div>
<div style="position:absolute;left:1088.60px;top:349.50px;width:13.90px;height:1.50px;background:#444;"></div>
<svg style="position:absolute;left:1114.00px;top:339.80px;overflow:visible" width="7.2" height="4" viewBox="0 0 7.2 4"><path fill="#6d6d6d" d="M0 0h7.2L3.6 4.2z"/></svg>
<div style="position:absolute;left:1128.00px;top:331.77px;font-family:'Liberation Sans', sans-serif;font-size:18.5px;line-height:18.5px;white-space:pre;color:#555;font-weight:normal;transform-origin:0 0;transform:scaleX(0.8046);">abc</div>
<div style="position:absolute;left:1127.50px;top:340.80px;width:25.00px;height:1.50px;background:#555;"></div>
<div style="position:absolute;left:1162.80px;top:332.20px;font-family:'Liberation Sans', sans-serif;font-size:18px;line-height:18px;white-space:pre;color:#444;font-weight:bold;transform-origin:0 0;transform:scaleX(1.1328);">X</div>
<div style="position:absolute;left:1175.70px;top:343.50px;font-family:'Liberation Sans', sans-serif;font-size:10px;line-height:10px;white-space:pre;color:#3f78bd;font-weight:normal;transform-origin:0 0;transform:scaleX(1.0429);">2</div>
<div style="position:absolute;left:1192.00px;top:332.20px;font-family:'Liberation Sans', sans-serif;font-size:18px;line-height:18px;white-space:pre;color:#444;font-weight:bold;transform-origin:0 0;transform:scaleX(0.9745);">X</div>
<div style="position:absolute;left:1205.80px;top:328.50px;font-family:'Liberation Sans', sans-serif;font-size:10px;line-height:10px;white-space:pre;color:#3f78bd;font-weight:normal;transform-origin:0 0;transform:scaleX(1.0429);">2</div>
<div style="position:absolute;left:1219.00px;top:332.50px;width:1.00px;height:18.50px;background:#d6d6d6;"></div>
<div style="position:absolute;left:1232.40px;top:332.10px;font-family:'Liberation Sans', sans-serif;font-size:14px;line-height:14px;white-space:pre;color:#5a5a5a;font-weight:normal;transform-origin:0 0;transform:scaleX(1.0709);">A</div>
<svg style="position:absolute;left:1236.00px;top:336.00px;overflow:visible" width="16" height="16" viewBox="0 0 16 16"><path fill="#e88a9a" d="M9.2 0.8a2 2 0 0 1 2.8 0l3 3a2 2 0 0 1 0 2.8L8.3 13.3 2 7z"/><path fill="#f6c5cd" stroke="#e88a9a" stroke-width="1.2" d="M2 7 8.3 13.3 6.5 15.1a1.5 1.5 0 0 1-2.1 0L0.9 11.6a1.5 1.5 0 0 1 0-2.1z"/></svg>
<div style="position:absolute;left:1027.00px;top:363.15px;font-family:'Liberation Sans', sans-serif;font-size:23px;line-height:23px;white-space:pre;color:#f4f4f4;font-weight:bold;transform-origin:0 0;transform:scaleX(1.0054);-webkit-text-stroke:1.6px #bcbcbc;">A</div>
<svg style="position:absolute;left:1052.00px;top:374.00px;overflow:visible" width="7.5" height="4" viewBox="0 0 7.5 4"><path fill="#c8c8c8" d="M0 0h7.5L3.75 4z"/></svg>
<div style="position:absolute;left:1066.60px;top:361.75px;font-family:'Liberation Sans', sans-serif;font-size:13px;line-height:13px;white-space:pre;color:#555;font-weight:normal;transform-origin:0 0;transform:scaleX(0.8990);">ab</div>
<svg style="position:absolute;left:1073.00px;top:364.50px;overflow:visible" width="18" height="17" viewBox="0 0 18 17"><path fill="#6d6d6d" d="M13.6 0.6a1.7 1.7 0 0 1 2.4 0l1.2 1.2a1.7 1.7 0 0 1 0 2.4L8.2 13.2 4.4 9.4z"/><path fill="#555" d="M4.4 9.4 8.2 13.2 6 15.6H1.8z"/></svg>
<div style="position:absolute;left:1066.60px;top:381.00px;width:24.70px;height:6.00px;background:#ffff00;"></div>
<svg style="position:absolute;left:1097.20px;top:373.80px;overflow:visible" width="7.2" height="4" viewBox="0 0 7.2 4"><path fill="#6d6d6d" d="M0 0h7.2L3.6 4.2z"/></svg>
<div style="position:absolute;left:1115.50px;top:361.95px;font-family:'Liberation Sans', sans-serif;font-size:21px;line-height:21px;white-space:pre;color:#4a4a4a;font-weight:bold;transform-origin:0 0;transform:scaleX(0.9429);">A</div>
<div style="position:absolute;left:1111.00px;top:381.30px;width:23.80px;height:5.40px;background:#ff0000;"></div>
<svg style="position:absolute;left:1141.30px;top:373.80px;overflow:visible" width="7.2" height="4" viewBox="0 0 7.2 4"><path fill="#6d6d6d" d="M0 0h7.2L3.6 4.2z"/></svg>
<div style="position:absolute;left:1156.30px;top:365.00px;font-family:'Liberation Sans', sans-serif;font-size:20px;line-height:20px;white-space:pre;color:#444;font-weight:normal;transform-origin:0 0;transform:scaleX(0.9402);">Aa</div>
<svg style="position:absolute;left:1183.30px;top:373.80px;overflow:visible" width="7.2" height="4" viewBox="0 0 7.2 4"><path fill="#6d6d6d" d="M0 0h7.2L3.6 4.2z"/></svg>
<div style="position:absolute;left:1199.20px;top:362.00px;width:1.00px;height:25.00px;background:#d6d6d6;"></div>
<div style="position:absolute;left:1210.00px;top:366.10px;font-family:'Liberation Sans', sans-serif;font-size:22px;line-height:22px;white-space:pre;color:#555;font-weight:bold;transform-origin:0 0;transform:scaleX(1.0071);">A</div>
<svg style="position:absolute;left:1223.80px;top:365.00px;overflow:visible" width="6.2" height="4" viewBox="0 0 6.2 4"><path fill="#3f78bd" d="M0 4h6.2L3.1 0z"/></svg>
<div style="position:absolute;left:1241.00px;top:369.50px;font-family:'Liberation Sans', sans-serif;font-size:18px;line-height:18px;white-space:pre;color:#555;font-weight:bold;transform-origin:0 0;">A</div>
<svg style="position:absolute;left:1253.00px;top:365.00px;overflow:visible" width="6.6" height="3.8" viewBox="0 0 6.6 3.8"><path fill="#3f78bd" d="M0 0h6.6L3.3 3.8z"/></svg>
<svg style="position:absolute;left:1278.00px;top:298.00px;overflow:visible" width="22" height="21" viewBox="0 0 22 21"><circle cx="2.4" cy="2.6" r="2.3" fill="#3f78bd"/><rect x="7.2" y="2.0" width="14.6" height="1.3" fill="#6d6d6d"/><circle cx="2.4" cy="10.5" r="2.3" fill="#3f78bd"/><rect x="7.2" y="9.9" width="14.6" height="1.3" fill="#6d6d6d"/><circle cx="2.4" cy="18.7" r="2.3" fill="#3f78bd"/><rect x="7.2" y="18.099999999999998" width="14.6" height="1.3" fill="#6d6d6d"/></svg>
<svg style="position:absolute;left:1307.30px;top:308.00px;overflow:visible" width="7" height="3.8" viewBox="0 0 7 3.8"><path fill="#6d6d6d" d="M0 0h7.2L3.6 4.2z"/></svg>
<svg style="position:absolute;left:1322.00px;top:298.00px;overflow:visible" width="23" height="22" viewBox="0 0 23 22"><rect x="7.6" y="2.0" width="14.8" height="1.3" fill="#6d6d6d"/><rect x="7.6" y="9.9" width="14.8" height="1.3" fill="#6d6d6d"/><rect x="7.6" y="18.099999999999998" width="14.8" height="1.3" fill="#6d6d6d"/><text x="0" y="6" font-family="Liberation Sans" font-size="9.5" fill="#3f78bd">1</text><text x="0" y="14" font-family="Liberation Sans" font-size="9.5" fill="#3f78bd">2</text><text x="0" y="22" font-family="Liberation Sans" font-size="9.5" fill="#3f78bd">3</text></svg>
<svg style="position:absolute;left:1351.40px;top:308.00px;overflow:visible" width="7" height="3.8" viewBox="0 0 7 3.8"><path fill="#6d6d6d" d="M0 0h7.2L3.6 4.2z"/></svg>
<svg style="position:absolute;left:1365.70px;top:298.00px;overflow:visible" width="23" height="22" viewBox="0 0 23 22"><rect x="9" y="2" width="14" height="1.3" fill="#6d6d6d"/><rect x="13" y="9.9" width="9" height="1.3" fill="#6d6d6d"/><rect x="16.5" y="18.1" width="5.5" height="1.3" fill="#6d6d6d"/><text x="0" y="6.5" font-family="Liberation Sans" font-size="9.5" fill="#3f78bd">1</text><text x="5" y="14" font-family="Liberation Sans" font-size="9.5" fill="#3f78bd">a</text><text x="11" y="22" font-family="Liberation Sans" font-size="9.5" fill="#3f78bd">i</text></svg>
<svg style="position:absolute;left:1393.00px;top:308.00px;overflow:visible" width="7" height="3.8" viewBox="0 0 7 3.8"><path fill="#6d6d6d" d="M0 0h7.2L3.6 4.2z"/></svg>
<div style="position:absolute;left:1409.00px;top:297.00px;width:1.00px;height:22.60px;background:#d6d6d6;"></div>
<svg style="position:absolute;left:1418.80px;top:298.00px;overflow:visible" width="22.5" height="21" viewBox="0 0 22.5 21"><g fill="#6d6d6d"><rect x="0" y="0" width="22.5" height="1.3"/><rect x="9.5" y="5" width="13" height="1.3"/><rect x="9.5" y="10" width="13" height="1.3"/><rect x="9.5" y="15" width="13" height="1.3"/><rect x="0" y="20" width="22.5" height="1.3"/></g><path fill="#3f78bd" d="M0 10.6 5 6v3.3h4v2.6H5v3.3z"/></svg>
<svg style="position:absolute;left:1448.70px;top:298.00px;overflow:visible" width="22.5" height="21" viewBox="0 0 22.5 21"><g fill="#6d6d6d"><rect x="0" y="0" width="22.5" height="1.3"/><rect x="9.5" y="5" width="13" height="1.3"/><rect x="9.5" y="10" width="13" height="1.3"/><rect x="9.5" y="15" width="13" height="1.3"/><rect x="0" y="20" width="22.5" height="1.3"/></g><path fill="#3f78bd" d="M9 10.6 4 6v3.3H0v2.6h4v3.3z"/></svg>
<div style="position:absolute;left:1274.20px;top:328.20px;width:29.80px;height:30.40px;background:#c5c5c5;"></div>
<svg style="position:absolute;left:1279.00px;top:331.80px;overflow:visible" width="20" height="21" viewBox="0 0 20 21"><g fill="#6d6d6d"><rect x="0" y="0" width="20" height="1.3"/><rect x="0" y="4" width="14" height="1.3"/><rect x="0" y="8" width="20" height="1.3"/><rect x="0" y="12" width="14" height="1.3"/><rect x="0" y="16" width="20" height="1.3"/><rect x="0" y="20" width="14" height="1.3"/></g></svg>
<svg style="position:absolute;left:1309.00px;top:331.80px;overflow:visible" width="20" height="21" viewBox="0 0 20 21"><g fill="#6d6d6d"><rect x="0" y="0" width="20" height="1.3"/><rect x="3" y="4" width="14" height="1.3"/><rect x="0" y="8" width="20" height="1.3"/><rect x="3" y="12" width="14" height="1.3"/><rect x="0" y="16" width="20" height="1.3"/><rect x="3" y="20" width="14" height="1.3"/></g></svg>
<svg style="position:absolute;left:1339.20px;top:331.80px;overflow:visible" width="20" height="21" viewBox="0 0 20 21"><g fill="#6d6d6d"><rect x="0" y="0" width="20" height="1.3"/><rect x="6" y="4" width="14" height="1.3"/><rect x="0" y="8" width="20" height="1.3"/><rect x="6" y="12" width="14" height="1.3"/><rect x="0" y="16" width="20" height="1.3"/><rect x="6" y="20" width="14" height="1.3"/></g></svg>
<svg style="position:absolute;left:1369.00px;top:331.80px;overflow:visible" width="20" height="21" viewBox="0 0 20 21"><g fill="#6d6d6d"><rect x="0" y="0" width="20" height="1.3"/><rect x="0" y="4" width="20" height="1.3"/><rect x="0" y="8" width="20" height="1.3"/><rect x="0" y="12" width="20" height="1.3"/><rect x="0" y="16" width="20" height="1.3"/><rect x="0" y="20" width="20" height="1.3"/></g></svg>
<svg style="position:absolute;left:1395.40px;top:341.80px;overflow:visible" width="7" height="4" viewBox="0 0 7 4"><path fill="#6d6d6d" d="M0 0h7.2L3.6 4.2z"/></svg>
<div style="position:absolute;left:1411.10px;top:331.00px;width:1.00px;height:23.00px;background:#d6d6d6;"></div>
<svg style="position:absolute;left:1420.70px;top:331.80px;overflow:visible" width="23" height="23" viewBox="0 0 23 23"><rect x="3.1" y="4" width="1.8" height="15" fill="#3f78bd"/><path fill="#3f78bd" d="M4 0 8.2 5.6H-0.2zM4 23 8.2 17.4H-0.2z"/><g fill="#6d6d6d"><rect x="10" y="4" width="13" height="1.3"/><rect x="10" y="8" width="10" height="1.3"/><rect x="10" y="12" width="13" height="1.3"/><rect x="10" y="16" width="10" height="1.3"/></g></svg>
<svg style="position:absolute;left:1450.00px;top:341.80px;overflow:visible" width="7" height="4" viewBox="0 0 7 4"><path fill="#6d6d6d" d="M0 0h7.2L3.6 4.2z"/></svg>
<div style="position:absolute;left:1274.20px;top:361.20px;width:29.80px;height:30.40px;background:#c5c5c5;"></div>
<svg style="position:absolute;left:1279.60px;top:369.80px;overflow:visible" width="19" height="13" viewBox="0 0 19 13"><path fill="#3f78bd" d="M0 0v12l5-6z"/></svg>
<div style="position:absolute;left:1287.00px;top:368.40px;font-family:'Liberation Sans', sans-serif;font-size:16px;line-height:16px;white-space:pre;color:#5a5a5a;font-weight:bold;transform-origin:0 0;transform:scaleX(1.2362);">¶</div>
<div style="position:absolute;left:1309.80px;top:368.40px;font-family:'Liberation Sans', sans-serif;font-size:16px;line-height:16px;white-space:pre;color:#5a5a5a;font-weight:bold;transform-origin:0 0;transform:scaleX(1.2362);">¶</div>
<svg style="position:absolute;left:1322.50px;top:369.80px;overflow:visible" width="5.2" height="12" viewBox="0 0 5.2 12"><path fill="#3f78bd" d="M5.2 0v12L0 6z"/></svg>
<div style="position:absolute;left:1338.00px;top:365.50px;width:1.00px;height:21.50px;background:#d6d6d6;"></div>
<svg style="position:absolute;left:1347.00px;top:364.00px;overflow:visible" width="24" height="24" viewBox="0 0 24 24"><path fill="#3f78bd" d="M16.8 6.2c2.6 0.4 4.2 2.8 4 6.2l-1.4 3.6-0.8-4.6z"/><path fill="#fff" stroke="#6d6d6d" stroke-width="1.3" d="M11.2 4.2 18.4 11.3 11 18.6 3.8 11.4z"/><path fill="none" stroke="#6d6d6d" stroke-width="1.2" d="M8.8 7.6V2.4a1.9 1.9 0 0 1 3.8 0V8"/><circle cx="12.6" cy="8.6" r="1.1" fill="#6d6d6d"/><rect x="0.6" y="18.4" width="22.8" height="5" fill="#fff" stroke="#6d6d6d" stroke-width="1.2"/></svg>
<svg style="position:absolute;left:1377.20px;top:376.50px;overflow:visible" width="7.2" height="4" viewBox="0 0 7.2 4"><path fill="#6d6d6d" d="M0 0h7.2L3.6 4.2z"/></svg>
<svg style="position:absolute;left:1392.00px;top:365.20px;overflow:visible" width="21" height="21" viewBox="0 0 21 21"><g fill="none" stroke="#6a6a6a" stroke-width="1.3" stroke-dasharray="1.3 2.1"><path d="M0.65 0.65H20.4M0.65 10H20.4M0.65 0.65V19.5M10.5 0.65V19.5M20.4 0.65V19.5"/></g><rect x="0" y="19.6" width="21" height="1.4" fill="#6d6d6d"/></svg>
<svg style="position:absolute;left:1421.20px;top:376.50px;overflow:visible" width="7.2" height="4" viewBox="0 0 7.2 4"><path fill="#6d6d6d" d="M0 0h7.2L3.6 4.2z"/></svg>
<div style="position:absolute;left:1436.20px;top:365.00px;width:1.00px;height:22.00px;background:#d6d6d6;"></div>
<div style="position:absolute;left:1448.30px;top:364.10px;font-family:'Liberation Sans', sans-serif;font-size:14px;line-height:14px;white-space:pre;color:#3f78bd;font-weight:bold;transform-origin:0 0;transform:scaleX(0.9891);">A</div>
<div style="position:absolute;left:1448.50px;top:375.32px;font-family:'Liberation Sans', sans-serif;font-size:13.5px;line-height:13.5px;white-space:pre;color:#8e52a8;font-weight:bold;transform-origin:0 0;transform:scaleX(1.1884);">Z</div>
<svg style="position:absolute;left:1459.00px;top:366.00px;overflow:visible" width="9" height="21" viewBox="0 0 9 21"><g fill="none" stroke="#6d6d6d" stroke-width="1.4"><path d="M4.5 0v20M0.8 16.3l3.7 3.7 3.7-3.7"/></g></svg>
<div style="position:absolute;left:1476.10px;top:365.00px;width:1.00px;height:22.00px;background:#d6d6d6;"></div>
<svg style="position:absolute;left:1487.80px;top:366.20px;overflow:visible" width="16" height="20" viewBox="0 0 16 20"><path fill="#5a5a5a" d="M6.6 0.2H16v1.5H6.6zM6.6 0.2v10.4A5.2 5.2 0 0 1 6.6 0.2z"/><rect x="5.6" y="0.2" width="1.6" height="19.6" fill="#5a5a5a"/><rect x="10.6" y="0.2" width="1.6" height="19.6" fill="#5a5a5a"/></svg>
<svg style="position:absolute;left:1530.80px;top:298.80px;overflow:visible" width="44" height="42" viewBox="0 0 44 42"><path fill="#3f78bd" fill-rule="evenodd" d="M0.5 33.8 13.2 0.4h5.8l9.2 24.6-3.4 3.2-3.3-8.6H10.7L6.3 33.8zM12.3 15.4h8.5L16.5 4.2z"/><path fill="#7a7a7a" d="M42.6 8.6v8.8l-9.6 9.8-4-4z"/><path fill="#3f78bd" d="M28.2 24.2c3.6 2.2 4.9 6.2 2.4 10-3 4.4-11 6.2-21.6 6.9 4.6-3.8 6.6-9.6 10.2-13 2.6-2.4 5.8-4 9-3.9z"/><path fill="#fff" d="M27.6 26.4c2.4 1.6 3 4.4 1.3 6.6-1.1 1.4-2.6 1.9-3.8 1.8-0.4-2.2-1.8-3.8-4-4.4 1.6-2.2 4-3.8 6.5-4z"/></svg>
<div style="position:absolute;left:1528.60px;top:349.40px;font-family:'Liberation Sans', sans-serif;font-size:18px;line-height:18px;white-space:pre;color:#444;font-weight:normal;transform-origin:0 0;transform:scaleX(0.8936);">Styles</div>
<svg style="position:absolute;left:1547.30px;top:379.80px;overflow:visible" width="7.2" height="4" viewBox="0 0 7.2 4"><path fill="#6d6d6d" d="M0 0h7.2L3.6 4.2z"/></svg>
<div style="position:absolute;left:1594.60px;top:294.50px;width:45.20px;height:44.90px;background:#fafafa;border:1px solid #d6d6d6;"></div>
<svg style="position:absolute;left:1609.00px;top:306.60px;overflow:visible" width="18" height="19.5" viewBox="0 0 18 19.5"><g fill="none" stroke="#3f78bd" stroke-width="2"><circle cx="11" cy="7" r="5.8"/><path d="M6.8 11.3 1.2 17.8" stroke-width="2.6" stroke-linecap="round"/></g></svg>
<div style="position:absolute;left:1591.00px;top:347.30px;font-family:'Liberation Sans', sans-serif;font-size:18px;line-height:18px;white-space:pre;color:#444;font-weight:normal;transform-origin:0 0;transform:scaleX(0.9594);">Editing</div>
<svg style="position:absolute;left:1614.00px;top:377.70px;overflow:visible" width="7.2" height="4.2" viewBox="0 0 7.2 4.2"><path fill="#6d6d6d" d="M0 0h7.2L3.6 4.2z"/></svg>
<div style="position:absolute;left:919.00px;top:422.00px;width:1054.00px;height:491.00px;background:#e6e6e6;"></div>
<div style="position:absolute;left:944.00px;top:442.00px;width:977.00px;height:471.00px;background:#fff;border-left:1px solid #c6c6c6;border-top:1px solid #c6c6c6;border-right:1px solid #c6c6c6;"></div>
<div style="position:absolute;left:919.00px;top:912.50px;width:1054.00px;height:33.50px;background:#f1f1f1;border-top:1px solid #c6c6c6;"></div>
<div style="position:absolute;left:1087.40px;top:474.30px;width:253.00px;height:80.00px;background:#fff;border:1px solid #c8c8c8;box-shadow:1px 1px 2px rgba(0,0,0,0.15);"></div>
<div style="position:absolute;left:1090.90px;top:481.93px;font-family:'Liberation Sans', sans-serif;font-size:17.5px;line-height:17.5px;white-space:pre;color:#646464;font-weight:normal;transform-origin:0 0;transform:scaleX(1.0712);">file:///d:\files\assembly\output.</div>
<div style="position:absolute;left:1090.90px;top:507.12px;font-family:'Liberation Sans', sans-serif;font-size:17.5px;line-height:17.5px;white-space:pre;color:#646464;font-weight:normal;transform-origin:0 0;transform:scaleX(1.0410);">docx#gd_bookmark</div>
<div style="position:absolute;left:1090.90px;top:531.83px;font-family:'Liberation Sans', sans-serif;font-size:17.5px;line-height:17.5px;white-space:pre;color:#505050;font-weight:bold;transform-origin:0 0;transform:scaleX(1.0243);">Ctrl+Click to follow link</div>
<div style="position:absolute;left:1059.00px;top:562.08px;font-family:'Liberation Mono', monospace;font-size:17px;line-height:17px;white-space:pre;color:#1d3cc4;font-weight:normal;transform-origin:0 0;transform:scaleX(0.8953);">GroupDocs</div>
<div style="position:absolute;left:1059.00px;top:577.00px;width:82.20px;height:1.30px;background:#1d3cc4;"></div>
<div style="position:absolute;left:1142.00px;top:559.00px;width:1.20px;height:19.50px;background:#111;"></div>
<div style="position:absolute;left:1147.00px;top:559.23px;font-family:'Liberation Serif', serif;font-size:19px;line-height:19px;white-space:pre;color:#111;font-weight:normal;transform-origin:0 0;transform:scaleX(1.0099);">provides Document Manipulation APIs to view, convert, annotate, compare, sign,</div>
<div style="position:absolute;left:1059.00px;top:581.23px;font-family:'Liberation Serif', serif;font-size:19px;line-height:19px;white-space:pre;color:#111;font-weight:normal;transform-origin:0 0;transform:scaleX(1.0068);">assemble and search documents in your applications.</div>
<div style="position:absolute;left:1059.70px;top:712.83px;font-family:'Liberation Serif', serif;font-size:19px;line-height:19px;white-space:pre;color:#111;font-weight:normal;transform-origin:0 0;transform:scaleX(1.0087);">This is a bookmarked Text.</div>
<div style="position:absolute;left:925.80px;top:922.03px;font-family:'Liberation Sans', sans-serif;font-size:15.5px;line-height:15.5px;white-space:pre;color:#444;font-weight:normal;transform-origin:0 0;transform:scaleX(1.0224);">d:\files\assembly\output.docx#gd_bookmark</div>
<div style="position:absolute;left:1903.60px;top:921.83px;font-family:'Liberation Sans', sans-serif;font-size:15.5px;line-height:15.5px;white-space:pre;color:#444;font-weight:normal;transform-origin:0 0;transform:scaleX(0.9652);">80 %</div>
<div style="position:absolute;left:1606.20px;top:913.00px;width:44.60px;height:32.50px;background:#c8c8c8;"></div>
<svg style="position:absolute;left:1573.80px;top:919.80px;overflow:visible" width="20" height="19" viewBox="0 0 20 19"><g fill="none" stroke="#6d6d6d" stroke-width="1.1"><path d="M0.6 0.8h8.9v15.5H0.6zM10.5 0.8h8.9v15.5h-8.9z"/><path d="M2.3 3.8h5.5M2.3 6.8h5.5M2.3 9.8h5.5M2.3 12.8h5.5M12.2 3.8h5.5M12.2 6.8h5.5M12.2 9.8h5.5M12.2 12.8h5.5M10 16.3v2.4"/></g></svg>
<svg style="position:absolute;left:1618.70px;top:919.30px;overflow:visible" width="20" height="18" viewBox="0 0 20 18"><g fill="none" stroke="#6d6d6d" stroke-width="1.1"><rect x="0.6" y="0.6" width="18.8" height="16.8"/><path d="M3.5 4.5h13M3.5 7.5h13M3.5 10.5h13M3.5 13.5h13"/></g></svg>
<svg style="position:absolute;left:1664.00px;top:919.30px;overflow:visible" width="21" height="21" viewBox="0 0 21 21"><g fill="none" stroke="#6d6d6d" stroke-width="1.1"><path d="M11 14.6H0.6V0.6h15v7"/><path d="M3 4h10M3 7h10M3 10h6"/></g><circle cx="14.5" cy="14.5" r="5.6" fill="#6d6d6d"/><path fill="#f1f1f1" d="M11.5 11.5c1.5 0.5 2.5 1.5 2 3s1 2.5 2.5 3.5c-1.5 0.8-3.5 0.3-4.5-1zM15.5 9.5c1.2 0.2 2.5 1 3 2-1 0.5-2 0.3-3-0.5z"/></svg>
<div style="position:absolute;left:1701.60px;top:927.20px;width:11.50px;height:2.60px;background:#666;"></div>
<div style="position:absolute;left:1718.60px;top:929.00px;width:149.30px;height:1.00px;background:#a8a8a8;"></div>
<div style="position:absolute;left:1793.40px;top:925.00px;width:1.00px;height:7.00px;background:#a8a8a8;"></div>
<div style="position:absolute;left:1774.40px;top:922.00px;width:6.60px;height:16.20px;background:#666;"></div>
<div style="position:absolute;left:1872.80px;top:927.20px;width:13.80px;height:2.60px;background:#666;"></div>
<div style="position:absolute;left:1878.40px;top:922.60px;width:2.60px;height:13.10px;background:#666;"></div>
<svg style="position:absolute;left:218.40px;top:739.60px;overflow:visible" width="22" height="17" viewBox="0 0 22 17"><g fill="none" stroke="#6d6d6d" stroke-width="1.2"><path d="M0.6 0.6h9.5v15.6H0.6z"/><path d="M10.1 0.6h2"/></g><path fill="none" stroke="#6d6d6d" stroke-width="1.6" d="M12.5 7.5 15.5 11 21 2.5"/></svg>
<div style="position:absolute;left:725.20px;top:732.00px;width:44.50px;height:32.50px;background:#c8c8c8;"></div>
<svg style="position:absolute;left:693.20px;top:738.80px;overflow:visible" width="20" height="19" viewBox="0 0 20 19"><g fill="none" stroke="#6d6d6d" stroke-width="1.1"><path d="M0.6 0.8h8.9v15.5H0.6zM10.5 0.8h8.9v15.5h-8.9z"/><path d="M2.3 3.8h5.5M2.3 6.8h5.5M2.3 9.8h5.5M2.3 12.8h5.5M12.2 3.8h5.5M12.2 6.8h5.5M12.2 9.8h5.5M12.2 12.8h5.5M10 16.3v2.4"/></g></svg>
<svg style="position:absolute;left:738.20px;top:738.30px;overflow:visible" width="20" height="18" viewBox="0 0 20 18"><g fill="none" stroke="#6d6d6d" stroke-width="1.1"><rect x="0.6" y="0.6" width="18.8" height="16.8"/><path d="M3.5 4.5h13M3.5 7.5h13M3.5 10.5h13M3.5 13.5h13"/></g></svg>
<svg style="position:absolute;left:783.20px;top:738.30px;overflow:visible" width="21" height="21" viewBox="0 0 21 21"><g fill="none" stroke="#6d6d6d" stroke-width="1.1"><path d="M11 14.6H0.6V0.6h15v7"/><path d="M3 4h10M3 7h10M3 10h6"/></g><circle cx="14.5" cy="14.5" r="5.6" fill="#6d6d6d"/><path fill="#f1f1f1" d="M11.5 11.5c1.5 0.5 2.5 1.5 2 3s1 2.5 2.5 3.5c-1.5 0.8-3.5 0.3-4.5-1zM15.5 9.5c1.2 0.2 2.5 1 3 2-1 0.5-2 0.3-3-0.5z"/></svg>
<div style="position:absolute;left:821.50px;top:746.20px;width:11.50px;height:2.60px;background:#666;"></div>
<div style="position:absolute;left:838.50px;top:748.00px;width:77.50px;height:1.00px;background:#a8a8a8;"></div>
<div style="position:absolute;left:912.40px;top:744.00px;width:1.00px;height:7.00px;background:#a8a8a8;"></div>
<div style="position:absolute;left:893.90px;top:741.00px;width:6.60px;height:16.20px;background:#666;"></div>
<svg style="position:absolute;left:1947.00px;top:403.80px;overflow:visible" width="12.7" height="9.5" viewBox="0 0 12.7 9.5"><path fill="none" stroke="#777" stroke-width="2.6" d="M0.9 8.6 6.5 2.4 12.1 8.6"/></svg>
<div style="position:absolute;left:1946.00px;top:612.00px;width:25.00px;height:275.00px;background:#dadada;"></div>
<div style="position:absolute;left:1946.00px;top:423.50px;width:24.50px;height:24.50px;background:#fff;border:1px solid #d0d0d0;border-bottom:2px solid #c4c4c4;"></div>
<svg style="position:absolute;left:1952.50px;top:432.50px;overflow:visible" width="11" height="6" viewBox="0 0 11 6"><path fill="#777" d="M0 6h11L5.5 0z"/></svg>
<div style="position:absolute;left:1946.00px;top:448.00px;width:24.50px;height:164.00px;background:#fff;border:1px solid #d0d0d0;border-top:none;"></div>
<div style="position:absolute;left:1946.00px;top:887.50px;width:24.50px;height:24.00px;background:#fff;border:1px solid #dadada;"></div>
<svg style="position:absolute;left:1952.50px;top:896.50px;overflow:visible" width="11" height="6" viewBox="0 0 11 6"><path fill="#777" d="M0 0h11L5.5 6z"/></svg>
<svg style="position:absolute;left:0.00px;top:0.00px;overflow:visible" width="2000" height="976" viewBox="0 0 2000 976"><path fill="#1c92f6" d="M772.5 451.3 L774.2 455.6 L776.3 459.6 L778.5 463.6 L780.8 467.6 L783.1 471.5 L785.6 475.3 L788.2 479.1 L790.8 482.9 L793.5 486.6 L796.3 490.2 L799.2 493.9 L802.1 497.4 L805.1 501.0 L808.1 504.5 L811.2 507.9 L814.4 511.2 L817.6 514.6 L820.9 517.8 L824.2 521.0 L827.6 524.1 L831.1 527.1 L834.6 530.0 L838.2 532.8 L841.9 535.6 L845.6 538.2 L849.4 540.7 L853.3 543.1 L857.2 545.4 L861.2 547.6 L865.3 549.7 L869.4 551.6 L873.6 553.4 L877.9 555.0 L882.2 556.5 L886.6 557.9 L891.1 559.1 L895.6 560.1 L900.1 561.0 L904.7 561.8 L909.3 562.4 L914.0 562.8 L918.6 563.1 L923.3 563.3 L927.9 563.3 L932.5 563.2 L937.1 562.9 L941.6 562.5 L946.0 562.0 L950.5 561.2 L947.2 542.6 L1006.3 562.7 L959.4 603.3 L956.0 587.4 L951.1 586.9 L946.1 586.5 L941.1 586.2 L936.1 585.9 L931.0 585.5 L926.0 585.0 L921.0 584.4 L916.0 583.7 L911.0 582.9 L906.0 581.9 L901.1 580.9 L896.3 579.6 L891.5 578.3 L886.8 576.7 L882.1 575.0 L877.5 573.2 L872.9 571.1 L868.4 569.0 L864.0 566.6 L859.7 564.2 L855.4 561.5 L851.2 558.8 L847.1 555.9 L843.1 552.9 L839.1 549.7 L835.3 546.5 L831.5 543.1 L827.8 539.7 L824.2 536.1 L820.6 532.5 L817.2 528.8 L813.8 525.0 L810.5 521.2 L807.3 517.3 L804.2 513.3 L801.2 509.3 L798.3 505.2 L795.4 501.1 L792.7 496.9 L790.1 492.7 L787.6 488.4 L785.2 484.1 L783.0 479.7 L780.8 475.2 L778.8 470.6 L777.0 466.0 L775.3 461.2 L773.8 456.2 L772.5 451.3Z"/></svg>
</div>
</body></html>
